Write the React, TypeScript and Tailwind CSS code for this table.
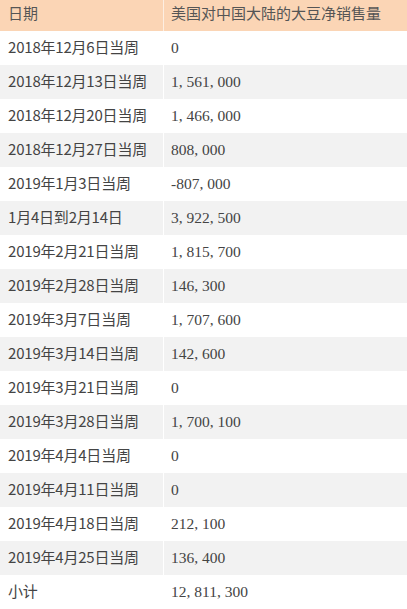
import React from 'react';

const rows: [string, string][] = [
  ['2018年12月6日当周', '0'],
  ['2018年12月13日当周', '1,561,000'],
  ['2018年12月20日当周', '1,466,000'],
  ['2018年12月27日当周', '808,000'],
  ['2019年1月3日当周', '-807,000'],
  ['1月4日到2月14日', '3,922,500'],
  ['2019年2月21日当周', '1,815,700'],
  ['2019年2月28日当周', '146,300'],
  ['2019年3月7日当周', '1,707,600'],
  ['2019年3月14日当周', '142,600'],
  ['2019年3月21日当周', '0'],
  ['2019年3月28日当周', '1,700,100'],
  ['2019年4月4日当周', '0'],
  ['2019年4月11日当周', '0'],
  ['2019年4月18日当周', '212,100'],
  ['2019年4月25日当周', '136,400'],
  ['小计', '12,811,300'],
];

const font = { fontFamily: '"Noto Sans CJK SC", sans-serif' };
const numFont = { fontFamily: '"Liberation Serif", "Noto Sans CJK SC", serif' };

export default function App() {
  return (
    <div className="w-[407px] bg-white text-[15px] text-[#444]" style={font}>
      <div className="flex h-[31px] bg-[#fbd5b5] text-[#555]">
        <div className="w-[164px] border-r border-white/60 pl-2 pt-[2px]">日期</div>
        <div className="flex-1 pl-[7px] pt-[2px]">美国对中国大陆的大豆净销售量</div>
      </div>
      {rows.map(([d, v], i) => (
        <div key={i} className={`flex h-[34px] ${i % 2 === 1 ? 'bg-[#f2f2f2]' : 'bg-white'}`}>
          <div className="w-[164px] border-r border-white pl-2 pt-[5px] tracking-[-0.2px]">{d}</div>
          <div className="flex-1 pl-[7px] pt-[5px] text-[15.5px]" style={numFont}>
            {v.replace(/,/g, ', ')}
          </div>
        </div>
      ))}
    </div>
  );
}
